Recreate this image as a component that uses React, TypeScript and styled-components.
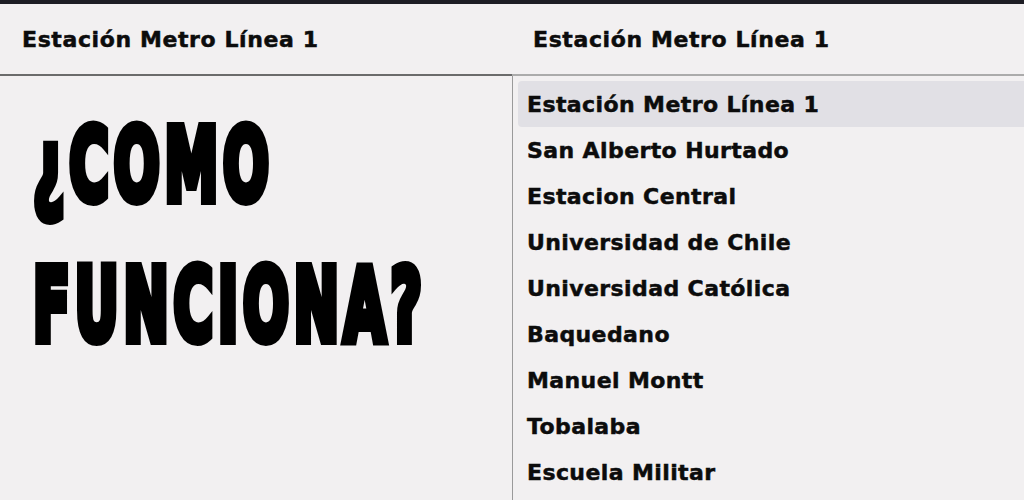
import styled, { createGlobalStyle } from 'styled-components';

const Global = createGlobalStyle`
  html, body {
    margin: 0;
    background: #f2f0f1;
  }
`;

const stations = [
  'Estación Metro Línea 1',
  'San Alberto Hurtado',
  'Estacion Central',
  'Universidad de Chile',
  'Universidad Católica',
  'Baquedano',
  'Manuel Montt',
  'Tobalaba',
  'Escuela Militar',
];

const Page = styled.div`
  width: 1024px;
  height: 500px;
  overflow: hidden;
  background: #f2f0f1;
  display: flex;
  flex-direction: column;
`;

const TopBar = styled.div`
  height: 4px;
  background: #1d1d24;
`;

const Columns = styled.div`
  flex: 1;
  display: grid;
  grid-template-columns: 512px 1fr;
`;

const Column = styled.div`
  display: flex;
  flex-direction: column;
  min-height: 0;
`;

const Header = styled.div<{ $line: string; $pad: number }>`
  height: 72px;
  box-sizing: border-box;
  display: flex;
  align-items: center;
  padding: 1px 0 0 ${p => p.$pad}px;
  border-bottom: 2px solid ${p => p.$line};
  font-family: 'DejaVu Sans', sans-serif;
  font-weight: bold;
  font-size: 22px;
  letter-spacing: 0.6px;
  -webkit-text-stroke: 0.5px #0c0c0c;
  color: #0c0c0c;
`;

const TitleBox = styled.div`
  padding: 40px 0 0 33px;
`;

const TitleLine = styled.div`
  height: 140px;
  font-family: 'DejaVu Sans', sans-serif;
  font-weight: bold;
  font-size: 100px;
  line-height: 100px;
  letter-spacing: 9px;
  color: #000;
  -webkit-text-stroke: 10px #000;
  transform: scaleX(0.54);
  transform-origin: left top;
  white-space: nowrap;
`;

const List = styled.div`
  flex: 1;
  border-left: 1px solid #9a9a9a;
  padding: 5px 0 0 5px;
`;

const Item = styled.div<{ $active?: boolean }>`
  height: 46px;
  display: flex;
  align-items: center;
  padding-left: 9px;
  border-radius: 4px 0 0 4px;
  background: ${p => (p.$active ? '#e1e0e5' : 'transparent')};
  font-family: 'DejaVu Sans', sans-serif;
  font-weight: bold;
  font-size: 22px;
  letter-spacing: 0.4px;
  -webkit-text-stroke: 0.5px #0c0c0c;
  color: #0c0c0c;
`;

export default function App() {
  return (
    <Page>
      <Global />
      <TopBar />
      <Columns>
        <Column>
          <Header $line="#6b6b6b" $pad={22}>Estación Metro Línea 1</Header>
          <TitleBox>
            <TitleLine>¿COMO</TitleLine>
            <TitleLine>FUNCIONA?</TitleLine>
          </TitleBox>
        </Column>
        <Column>
          <Header $line="#ababab" $pad={21}>Estación Metro Línea 1</Header>
          <List>
            {stations.map((s, i) => (
              <Item key={s} $active={i === 0}>{s}</Item>
            ))}
          </List>
        </Column>
      </Columns>
    </Page>
  );
}
